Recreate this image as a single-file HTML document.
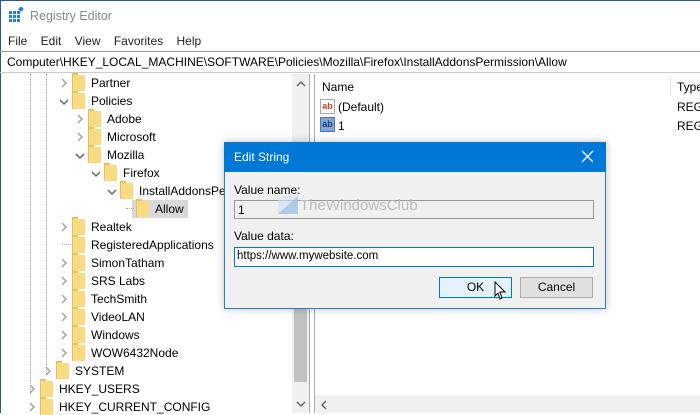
<!DOCTYPE html>
<html><head><style>
*{margin:0;padding:0;box-sizing:border-box}
body{width:700px;height:413px;overflow:hidden;background:#fff;font-family:"Liberation Sans",sans-serif;font-size:12px;color:#000;position:relative}
.a{position:absolute;white-space:nowrap}
.fold{position:absolute;width:13px;height:16px;background:#fbdb82;border-left:1px solid #e8c25a}
.fold:before{content:"";position:absolute;left:-1px;top:-2px;width:6px;height:2px;background:#e8c25a}
.chev{position:absolute}
</style></head><body>
<div class="a" style="left:0;top:0;width:700px;height:1px;background:#2b5b7a"></div>
<div class="a" style="left:0;top:0;width:1px;height:413px;background:#2b5b7a"></div>
<svg class="a" style="left:8px;top:7px" width="16" height="16"><g fill="#2a7bd4"><rect x="1" y="4" width="3" height="3"/><rect x="5" y="4" width="3" height="3"/><rect x="9" y="4" width="3" height="3"/><rect x="1" y="8" width="3" height="3"/><rect x="5" y="8" width="3" height="3"/><rect x="9" y="8" width="3" height="3"/><rect x="1" y="12" width="3" height="3"/><rect x="5" y="12" width="3" height="3"/><rect x="9" y="12" width="3" height="3"/><rect x="11" y="0" width="4" height="4" transform="rotate(45 13 2)"/></g></svg>
<div class="a" style="left:30px;top:9px;color:#888;font-size:12.5px">Registry Editor</div>
<div class="a" style="left:8px;top:34px;color:#222;font-size:12px">File&nbsp;&nbsp;&nbsp;&nbsp;Edit&nbsp;&nbsp;&nbsp;&nbsp;View&nbsp;&nbsp;&nbsp;&nbsp;Favorites&nbsp;&nbsp;&nbsp;&nbsp;Help</div>
<div class="a" style="left:0;top:51px;width:700px;height:22px;border-top:1px solid #999;border-bottom:1px solid #ccc"></div>
<div class="a" style="left:7px;top:55px;font-size:12px">Computer\HKEY_LOCAL_MACHINE\SOFTWARE\Policies\Mozilla\Firefox\InstallAddonsPermission\Allow</div>
<div class="a" style="left:30px;top:74px;height:320px;border-left:1px dotted #aaa"></div>
<div class="a" style="left:46px;top:74px;height:300px;border-left:1px dotted #aaa"></div>
<div class="a" style="left:132px;top:200px;width:56px;height:18px;background:#d9d9d9"></div>
<div class="a" style="left:126px;top:208px;width:8px;border-top:1px dotted #aaa"></div>
<div class="a" style="left:62px;top:244px;width:9px;border-top:1px dotted #aaa"></div>
<div id="tree"></div>
<script>
var rows=[["Partner",62,83,">"],["Policies",62,101,"v"],["Adobe",78,119,">"],["Microsoft",78,137,">"],["Mozilla",78,155,"v"],["Firefox",94,173,"v"],["InstallAddonsPe",110,191,"v"],["Allow",126,209,""],["Realtek",62,227,">"],["RegisteredApplications",62,245,""],["SimonTatham",62,263,">"],["SRS Labs",62,281,">"],["TechSmith",62,299,">"],["VideoLAN",62,317,">"],["Windows",62,335,">"],["WOW6432Node",62,353,">"],["SYSTEM",46,371,">"],["HKEY_USERS",30,389,">"],["HKEY_CURRENT_CONFIG",30,407,">"]];
var h="";rows.forEach(function(r){var x=r[1],y=r[2];
if(r[3]=="&gt;"||r[3]==">") h+='<svg class="chev" style="left:'+(x-2)+'px;top:'+(y-5)+'px" width="8" height="10"><path d="M2 1 L6 5 L2 9" fill="none" stroke="#a0a0a0" stroke-width="1.4"/></svg>';
else if(r[3]=="v") h+='<svg class="chev" style="left:'+(x-3)+'px;top:'+(y-3)+'px" width="10" height="8"><path d="M1 2 L5 6 L9 2" fill="none" stroke="#606060" stroke-width="1.4"/></svg>';
h+='<div class="fold" style="left:'+(x+10)+'px;top:'+(y-8)+'px"></div>';
h+='<div class="a" style="left:'+(x+29)+'px;top:'+(y-7)+'px">'+r[0]+'</div>';});
document.getElementById("tree").innerHTML=h;
</script>
<div class="a" style="left:292px;top:74px;width:17px;height:339px;background:#f0f0f0"></div>
<svg class="a" style="left:296px;top:80px" width="10" height="8"><path d="M1 6 L5 2 L9 6" fill="none" stroke="#606060" stroke-width="1.4"/></svg>
<div class="a" style="left:294px;top:268px;width:13px;height:114px;background:#c2c2c2"></div>
<svg class="a" style="left:296px;top:400px" width="10" height="8"><path d="M1 2 L5 6 L9 2" fill="none" stroke="#606060" stroke-width="1.4"/></svg>
<div class="a" style="left:309px;top:74px;width:1px;height:339px;background:#aaa"></div>
<div class="a" style="left:314px;top:74px;width:1px;height:339px;background:#aaa"></div>
<div class="a" style="left:315px;top:395px;width:385px;height:18px;background:#f0f0f0"></div>
<svg class="a" style="left:320px;top:400px" width="8" height="10"><path d="M6 1 L2 5 L6 9" fill="none" stroke="#606060" stroke-width="1.4"/></svg>
<div class="a" style="left:322px;top:80px">Name</div>
<div class="a" style="left:670px;top:76px;width:1px;height:20px;background:#e5e5e5"></div>
<div class="a" style="left:677px;top:80px">Type</div>
<div class="a" style="left:320px;top:99px;width:15px;height:15px;border:1px solid #aaa;background:#fff;color:#d04020;font-size:9px;font-weight:bold;line-height:12px;text-align:center">ab</div>
<div class="a" style="left:338px;top:100px">(Default)</div>
<div class="a" style="left:677px;top:100px">REG_</div>
<div class="a" style="left:320px;top:117px;width:15px;height:15px;background:#7fa6d6;border:1px solid #4a7ab8;color:#1c3e78;font-size:9px;font-weight:bold;line-height:12px;text-align:center">ab</div>
<div class="a" style="left:338px;top:119px">1</div>
<div class="a" style="left:677px;top:119px">REG_</div>
<div class="a" style="left:224px;top:142px;width:382px;height:167px;background:#f0f0f0;border:1px solid #2b7bd0;box-shadow:0 0 8px rgba(0,0,0,.25)"></div>
<div class="a" style="left:224px;top:142px;width:382px;height:30px;background:#0078d7"></div>
<div class="a" style="left:234px;top:150px;color:#fff;font-size:12px">Edit String</div>
<svg class="a" style="left:581px;top:150px" width="13" height="13"><path d="M1 1 L12 12 M12 1 L1 12" stroke="#fff" stroke-width="1.3"/></svg>
<div class="a" style="left:234px;top:183px">Value name:</div>
<div class="a" style="left:234px;top:200px;width:360px;height:19px;background:#f0f0f0;border:1px solid #999"></div>
<div class="a" style="left:238px;top:203px">1</div>
<svg class="a" style="left:278px;top:196px" width="20" height="18"><path d="M0 18 L20 0 L20 18Z" fill="#9ec3e6" opacity=".8"/><path d="M0 0 L20 0 L0 18Z" fill="#cfe1f2" opacity=".6"/></svg>
<div class="a" style="left:300px;top:197px;color:#bbb;font-size:15px">TheWindowsClub</div>
<div class="a" style="left:234px;top:229px">Value data:</div>
<div class="a" style="left:234px;top:247px;width:360px;height:20px;background:#fff;border:1px solid #0078d7"></div>
<div class="a" style="left:237px;top:250px;font-size:11.5px">https://www.mywebsite.com</div>
<div class="a" style="left:439px;top:277px;width:73px;height:21px;background:#e5f1fb;border:1px solid #0078d7;text-align:center;line-height:19px">OK</div>
<div class="a" style="left:520px;top:277px;width:73px;height:21px;background:#e1e1e1;border:1px solid #adadad;text-align:center;line-height:19px">Cancel</div>
<svg class="a" style="left:494px;top:281px" width="14" height="20"><path d="M1 1 L1 15 L4 12 L6 18 L8 17 L6 11 L11 11 Z" fill="#fff" stroke="#000" stroke-width="1"/></svg>
</body></html>
